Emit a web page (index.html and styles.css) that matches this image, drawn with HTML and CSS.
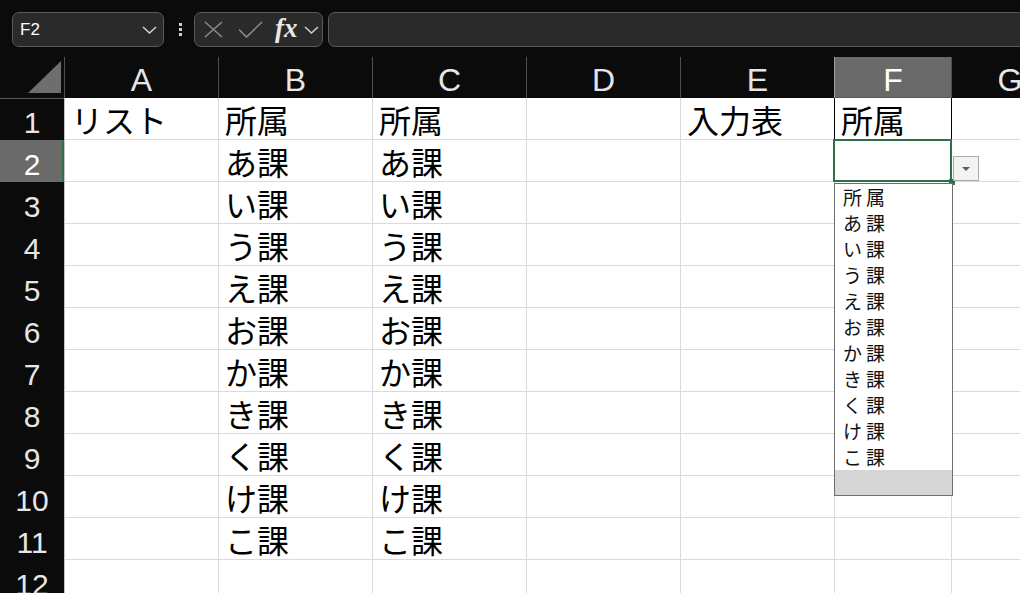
FILE: index.html
```html
<!DOCTYPE html>
<html lang="ja">
<head>
  <meta charset="UTF-8">
  <title>入力規則 - リスト</title>
  <link rel="stylesheet" href="styles.css">
</head>
<body>
  <div class="topbar">
    <div class="namebox">
      <span>F2</span>
      <svg width="15" height="8" viewBox="0 0 15 8"><polyline points="1,1 7.5,7 14,1" fill="none" stroke="#d0d0d0" stroke-width="1.5"/></svg>
    </div>
    <div class="grip"><i></i><i></i><i></i></div>
    <div class="fxbox">
      <svg class="cancel" width="19" height="17" viewBox="0 0 19 17"><path d="M1 1L18 16M18 1L1 16" stroke="#8a8a8a" stroke-width="1.6" fill="none"/></svg>
      <svg class="enter" width="25" height="17" viewBox="0 0 25 17"><polyline points="1,8.5 8.5,16 24,1" fill="none" stroke="#8a8a8a" stroke-width="1.6"/></svg>
      <span class="fx">fx</span>
      <svg class="more" width="15" height="8" viewBox="0 0 15 8"><polyline points="1,1 7.5,7 14,1" fill="none" stroke="#d0d0d0" stroke-width="1.5"/></svg>
    </div>
    <div class="formula"></div>
  </div>

  <div class="sheet">
    <div class="row head">
      <div class="corner">
        <svg width="64" height="41" viewBox="0 0 64 41"><polygon points="28,36 61,4 61,36" fill="#6e6e6e"/></svg>
      </div>
      <div class="col">A</div>
      <div class="col">B</div>
      <div class="col">C</div>
      <div class="col">D</div>
      <div class="col">E</div>
      <div class="col on">F</div>
      <div class="col">G</div>
      <div class="col"></div>
    </div>

    <div class="row">
      <div class="num">1</div>
      <div class="c">リスト</div>
      <div class="c">所属</div>
      <div class="c">所属</div>
      <div class="c"></div>
      <div class="c boxed">入力表</div>
      <div class="c boxed">所属</div>
      <div class="c"></div>
      <div class="c"></div>
    </div>
    <div class="row">
      <div class="num on">2</div>
      <div class="c"></div>
      <div class="c">あ課</div>
      <div class="c">あ課</div>
      <div class="c"></div>
      <div class="c"></div>
      <div class="c active">
        <div class="cursor"><i class="handle"></i></div>
        <div class="drop-btn"></div>
        <ul class="list">
          <li>所属</li>
          <li>あ課</li>
          <li>い課</li>
          <li>う課</li>
          <li>え課</li>
          <li>お課</li>
          <li>か課</li>
          <li>き課</li>
          <li>く課</li>
          <li>け課</li>
          <li>こ課</li>
        </ul>
      </div>
      <div class="c"></div>
      <div class="c"></div>
    </div>
    <div class="row">
      <div class="num">3</div>
      <div class="c"></div>
      <div class="c">い課</div>
      <div class="c">い課</div>
      <div class="c"></div><div class="c"></div><div class="c"></div><div class="c"></div><div class="c"></div>
    </div>
    <div class="row">
      <div class="num">4</div>
      <div class="c"></div>
      <div class="c">う課</div>
      <div class="c">う課</div>
      <div class="c"></div><div class="c"></div><div class="c"></div><div class="c"></div><div class="c"></div>
    </div>
    <div class="row">
      <div class="num">5</div>
      <div class="c"></div>
      <div class="c">え課</div>
      <div class="c">え課</div>
      <div class="c"></div><div class="c"></div><div class="c"></div><div class="c"></div><div class="c"></div>
    </div>
    <div class="row">
      <div class="num">6</div>
      <div class="c"></div>
      <div class="c">お課</div>
      <div class="c">お課</div>
      <div class="c"></div><div class="c"></div><div class="c"></div><div class="c"></div><div class="c"></div>
    </div>
    <div class="row">
      <div class="num">7</div>
      <div class="c"></div>
      <div class="c">か課</div>
      <div class="c">か課</div>
      <div class="c"></div><div class="c"></div><div class="c"></div><div class="c"></div><div class="c"></div>
    </div>
    <div class="row">
      <div class="num">8</div>
      <div class="c"></div>
      <div class="c">き課</div>
      <div class="c">き課</div>
      <div class="c"></div><div class="c"></div><div class="c"></div><div class="c"></div><div class="c"></div>
    </div>
    <div class="row">
      <div class="num">9</div>
      <div class="c"></div>
      <div class="c">く課</div>
      <div class="c">く課</div>
      <div class="c"></div><div class="c"></div><div class="c"></div><div class="c"></div><div class="c"></div>
    </div>
    <div class="row">
      <div class="num">10</div>
      <div class="c"></div>
      <div class="c">け課</div>
      <div class="c">け課</div>
      <div class="c"></div><div class="c"></div><div class="c"></div><div class="c"></div><div class="c"></div>
    </div>
    <div class="row">
      <div class="num">11</div>
      <div class="c"></div>
      <div class="c">こ課</div>
      <div class="c">こ課</div>
      <div class="c"></div><div class="c"></div><div class="c"></div><div class="c"></div><div class="c"></div>
    </div>
    <div class="row">
      <div class="num">12</div>
      <div class="c"></div><div class="c"></div><div class="c"></div><div class="c"></div>
      <div class="c"></div><div class="c"></div><div class="c"></div><div class="c"></div>
    </div>
  </div>
</body>
</html>
```

FILE: styles.css
```css
body {
  margin: 0;
  width: 1020px;
  height: 593px;
  overflow: hidden;
  background: #0b0b0b;
  font-family: "Liberation Sans", Arial, sans-serif;
}

/* formula bar */
.topbar {
  display: flex;
  align-items: flex-start;
  height: 57px;
  padding: 12px 0 0 12px;
  box-sizing: border-box;
}
.topbar > * {
  flex: none;
}
.namebox, .fxbox, .formula {
  height: 35px;
  box-sizing: border-box;
  border: 1px solid #5a5a5a;
  border-radius: 7px;
  background: #2a2a2a;
}
.namebox {
  width: 152px;
  display: flex;
  align-items: center;
  justify-content: space-between;
  padding: 0 6px 0 7px;
  color: #fff;
  font-size: 17px;
}
.grip {
  display: flex;
  flex-direction: column;
  gap: 2px;
  margin: 11px 12px 0 15px;
}
.grip i {
  width: 3px;
  height: 3px;
  background: #d0d0d0;
}
.fxbox {
  width: 129px;
  display: flex;
  align-items: center;
  padding-left: 9px;
}
.fxbox .enter {
  margin-left: 15px;
}
.fx {
  margin-left: 12px;
  font-family: "Liberation Serif", serif;
  font-style: italic;
  font-weight: bold;
  font-size: 27px;
  line-height: 27px;
  color: #e8e8e8;
  margin-top: -3px;
}
.fxbox .more {
  margin-left: 6px;
}
.formula {
  width: 720px;
  margin-left: 5px;
}

/* grid */
.row {
  display: grid;
  grid-template-columns: 65px repeat(5, 154px) 117px 117px 1fr;
  height: 42px;
}
.row.head {
  height: 41px;
}
.corner {
  border-right: 1px solid #4e4e4e;
  border-bottom: 1px solid #5a5a5a;
}
.corner svg {
  display: block;
}
.col {
  border-right: 1px solid #4e4e4e;
  color: #e6e6e6;
  font-size: 32px;
  line-height: 34px;
  padding-top: 6px;
  text-align: center;
}
.col.on {
  background: #6a6a6a;
  color: #fff;
  border-bottom: 2px solid #2d7049;
  box-shadow: -1px 0 #a0a0a0;
}
.num {
  border-right: 1px solid #c4c4c4;
  color: #e6e6e6;
  font-size: 30px;
  line-height: 33px;
  padding-top: 8px;
  text-align: center;
}
.num.on {
  background: #6a6a6a;
  color: #fff;
  box-shadow: inset -2px 0 #2d7049;
}
.c {
  display: flex;
  align-items: flex-end;
  box-sizing: border-box;
  padding: 0 0 4px 6px;
  background: #fff;
  border-right: 1px solid #dadada;
  border-bottom: 1px solid #dadada;
  font-family: "Noto Sans CJK JP", sans-serif;
  font-size: 32px;
  line-height: 32px;
  color: #000;
  white-space: nowrap;
}
.c.boxed {
  border-right-color: #000;
}

/* active cell and validation list */
.active {
  position: relative;
}
.cursor {
  position: absolute;
  left: -2px;
  top: -1px;
  right: -1px;
  bottom: -1px;
  border: 2px solid #2d7049;
}
.handle {
  position: absolute;
  right: -5px;
  bottom: -5px;
  width: 6px;
  height: 6px;
  background: #2d7049;
}
.drop-btn {
  position: absolute;
  left: 118px;
  top: 16px;
  width: 26px;
  height: 25px;
  box-sizing: border-box;
  border: 1px solid #ababab;
  background: #f3f3f3;
}
.drop-btn::after {
  content: "";
  position: absolute;
  left: 8px;
  top: 10px;
  border-left: 4px solid transparent;
  border-right: 4px solid transparent;
  border-top: 4px solid #5e5e5e;
}
.list {
  position: absolute;
  z-index: 2;
  left: -1px;
  top: 43px;
  width: 119px;
  box-sizing: border-box;
  margin: 0;
  padding: 0 0 25px;
  list-style: none;
  border: 1px solid #6e6e6e;
  background: linear-gradient(#fff, #fff) top / 100% 286px no-repeat, #d6d6d6;
}
.list li {
  height: 26px;
  padding-left: 8px;
  font-family: "Noto Sans CJK JP", sans-serif;
  font-size: 19px;
  line-height: 26px;
  letter-spacing: 4px;
  color: #111;
}
```
